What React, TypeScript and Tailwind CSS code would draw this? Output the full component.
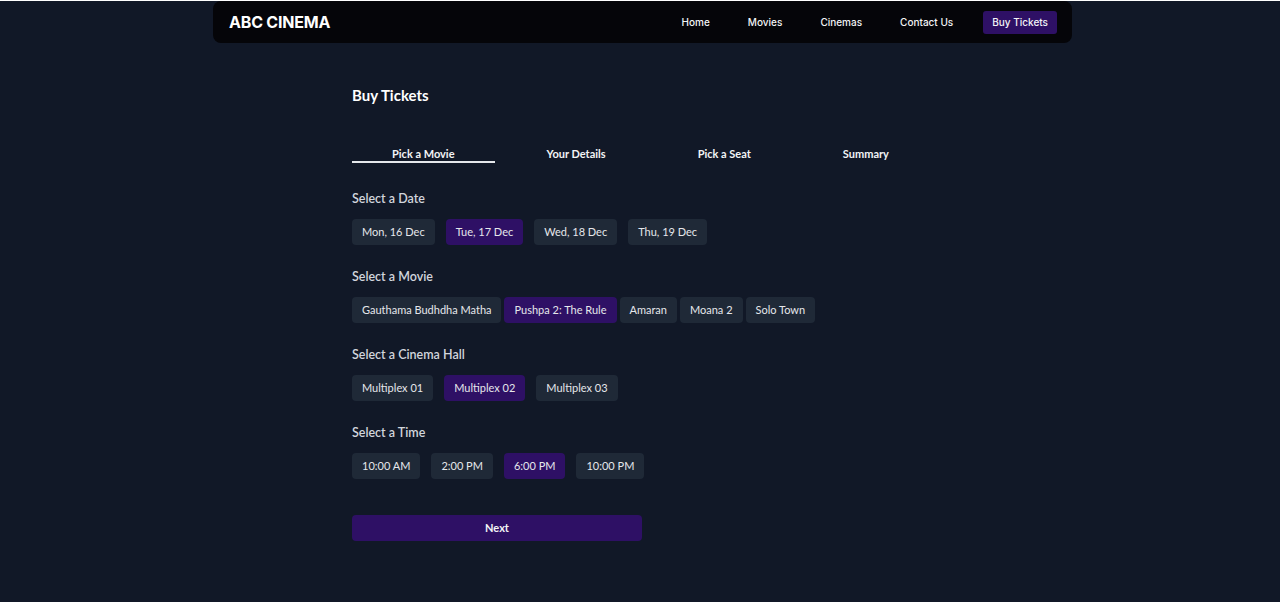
import React, { useState } from 'react';

const dates = ['Mon, 16 Dec', 'Tue, 17 Dec', 'Wed, 18 Dec', 'Thu, 19 Dec'];
const movies = ['Gauthama Budhdha Matha', 'Pushpa 2: The Rule', 'Amaran', 'Moana 2', 'Solo Town'];
const halls = ['Multiplex 01', 'Multiplex 02', 'Multiplex 03'];
const times = ['10:00 AM', '2:00 PM', '6:00 PM', '10:00 PM'];
const steps = ['Pick a Movie', 'Your Details', 'Pick a Seat', 'Summary'];
const navLinks = ['Home', 'Movies', 'Cinemas', 'Contact Us'];

const Option: React.FC<{ label: string; active: boolean; onClick: () => void }> = ({ label, active, onClick }) => (
  <button
    onClick={onClick}
    className={`h-[26px] px-[10px] rounded-[4px] text-[11px] text-gray-200 whitespace-nowrap ${
      active ? 'bg-[#2e1065]' : 'bg-[#1f2937]'
    }`}
  >
    {label}
  </button>
);

const Section: React.FC<{
  title: string;
  items: string[];
  value: string;
  onChange: (v: string) => void;
  gap: string;
}> = ({ title, items, value, onChange, gap }) => (
  <section className="mb-[22px]">
    <h3 className="text-[12.5px] leading-5 font-semibold text-gray-300 mb-[10px]">{title}</h3>
    <div className={`flex ${gap}`}>
      {items.map(item => (
        <Option key={item} label={item} active={item === value} onClick={() => onChange(item)} />
      ))}
    </div>
  </section>
);

export default function App() {
  const [date, setDate] = useState(dates[1]);
  const [movie, setMovie] = useState(movies[1]);
  const [hall, setHall] = useState(halls[1]);
  const [time, setTime] = useState(times[2]);
  const [step] = useState(0);

  return (
    <div className="min-h-[602px] bg-[#111827] text-white" style={{ fontFamily: 'Lato, "Open Sans", sans-serif' }}>
      {/* Navbar */}
      <nav
        className="ml-[213px] w-[859px] h-[42px] mt-[1px] flex items-center justify-between pl-4 pr-[15px] bg-[#050509] rounded-lg"
        style={{ fontFamily: 'Inter, sans-serif' }}
      >
        <span className="text-[16px] font-bold tracking-[-0.2px]">ABC CINEMA</span>
        <div className="flex items-center gap-[18px]">
          {navLinks.map(link => (
            <a key={link} className="px-2.5 text-[10px] font-medium text-gray-100">
              {link}
            </a>
          ))}
          <a className="ml-[2px] h-[23px] px-[9px] flex items-center rounded-[3px] bg-[#2e1065] text-[10px] font-medium text-gray-100">
            Buy Tickets
          </a>
        </div>
      </nav>

      {/* Main */}
      <main className="mx-auto max-w-3xl px-24">
        <h1 className="mt-[40px] text-[15px] leading-6 font-bold text-white">Buy Tickets</h1>

        {/* Steps */}
        <div className="mt-[40px] flex gap-3">
          {steps.map((s, i) => (
            <div key={s} className="px-10 flex flex-col items-center">
              <span className="text-[11px] leading-[14px] font-bold text-gray-100 whitespace-nowrap">{s}</span>
              <span className={`h-[2px] w-[calc(100%+80px)] ${i === step ? 'bg-gray-200' : 'bg-transparent'}`} />
            </div>
          ))}
        </div>

        <div className="mt-[26px]">
          <Section title="Select a Date" items={dates} value={date} onChange={setDate} gap="gap-[11px]" />
          <Section title="Select a Movie" items={movies} value={movie} onChange={setMovie} gap="gap-[3px]" />
          <Section title="Select a Cinema Hall" items={halls} value={hall} onChange={setHall} gap="gap-[11px]" />
          <Section title="Select a Time" items={times} value={time} onChange={setTime} gap="gap-[11px]" />
        </div>

        <button className="mt-[14px] w-[290px] h-[26px] rounded-[4px] bg-[#2e1065] text-[11px] font-bold text-gray-100">
          Next
        </button>
      </main>
    </div>
  );
}
